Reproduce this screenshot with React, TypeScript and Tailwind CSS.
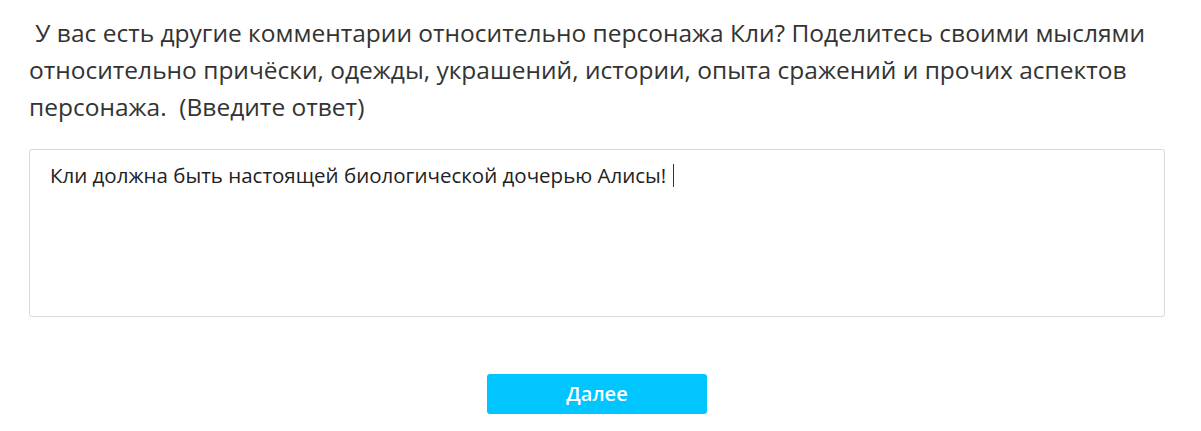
const question =
  "\u00a0У вас есть другие комментарии относительно персонажа Кли? Поделитесь своими мыслями относительно причёски, одежды, украшений, истории, опыта сражений и прочих аспектов персонажа.\u00a0 (Введите ответ)";

export default function App() {
  return (
    <div className="min-h-[431px] w-[1201px] bg-white pl-[29px] pt-[14px] font-['Open_Sans','Noto_Sans',sans-serif] text-[#333333]">
      <p className="w-[1140px] text-[24.5px] leading-[37px]">{question}</p>

      <div className="mt-[24px] h-[168px] w-[1136px] rounded-[3px] border border-[#d9d9d9] px-[20px] pt-[10px] text-[20.5px] leading-[26px] text-[#222]">
        Кли должна быть настоящей биологической дочерью Алисы!
        <span className="ml-[7px] inline-block h-[23px] w-px translate-y-[4px] bg-[#333]" />
      </div>

      <div className="mt-[57px] flex w-[1136px] justify-center">
        <button className="h-[40px] w-[220px] rounded-[3px] bg-[#00c5ff] text-[20px] font-semibold text-white">
          Далее
        </button>
      </div>
    </div>
  );
}
